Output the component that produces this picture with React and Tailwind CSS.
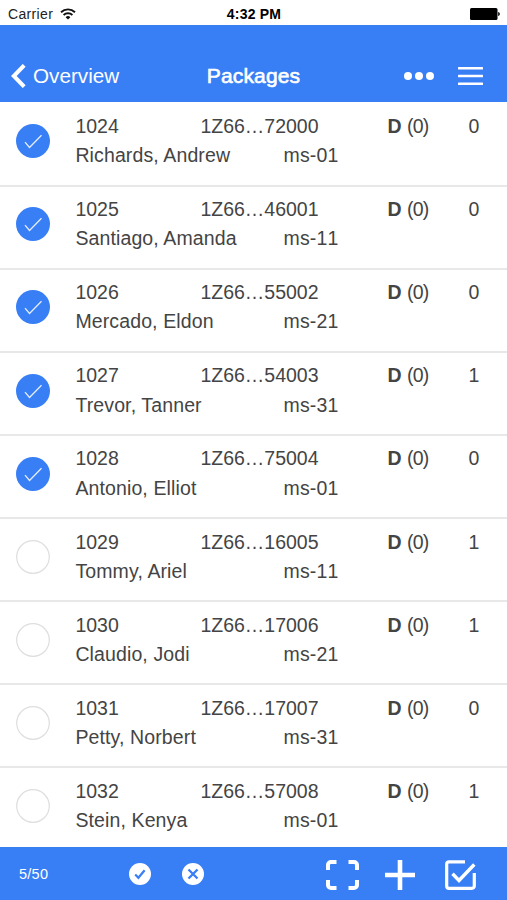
import React, { useState } from 'react';

const initialPackages = [
  { id: '1024', tracking: '1Z66…72000', name: 'Richards, Andrew', mailstop: 'ms-01', count: 0, selected: true },
  { id: '1025', tracking: '1Z66…46001', name: 'Santiago, Amanda', mailstop: 'ms-11', count: 0, selected: true },
  { id: '1026', tracking: '1Z66…55002', name: 'Mercado, Eldon', mailstop: 'ms-21', count: 0, selected: true },
  { id: '1027', tracking: '1Z66…54003', name: 'Trevor, Tanner', mailstop: 'ms-31', count: 1, selected: true },
  { id: '1028', tracking: '1Z66…75004', name: 'Antonio, Elliot', mailstop: 'ms-01', count: 0, selected: true },
  { id: '1029', tracking: '1Z66…16005', name: 'Tommy, Ariel', mailstop: 'ms-11', count: 1, selected: false },
  { id: '1030', tracking: '1Z66…17006', name: 'Claudio, Jodi', mailstop: 'ms-21', count: 1, selected: false },
  { id: '1031', tracking: '1Z66…17007', name: 'Petty, Norbert', mailstop: 'ms-31', count: 0, selected: false },
  { id: '1032', tracking: '1Z66…57008', name: 'Stein, Kenya', mailstop: 'ms-01', count: 1, selected: false },
];

const StatusBar = () => (
  <div className="h-[25px] shrink-0 grid grid-cols-3 items-center pl-2 pr-[7px] pt-[3px] text-[14px] leading-none text-black">
    <div className="flex items-center gap-[7px]">
      <span className="tracking-[0.35px] text-[#222]">Carrier</span>
      <svg width="16" height="12" viewBox="0 0 16 12" fill="none" stroke="#111" strokeWidth="1.9">
        <path d="M1 4.2a10.2 10.2 0 0 1 14 0" />
        <path d="M3.6 7a6.4 6.4 0 0 1 8.8 0" />
        <path d="M8 11.6 5.6 9.2a3.4 3.4 0 0 1 4.8 0Z" fill="#111" stroke="none" />
      </svg>
    </div>
    <span className="text-center font-bold text-[14px] tracking-[0.2px] whitespace-nowrap">4:32 PM</span>
    <svg className="justify-self-end" width="30" height="12" viewBox="0 0 30 12">
      <rect x="0" y="0" width="27.5" height="12" rx="1.5" fill="#000" />
      <path d="M28.2 4c1 .3 1.6 1 1.6 2s-.6 1.7-1.6 2Z" fill="#000" />
    </svg>
  </div>
);

const Header = () => (
  <header className="h-[77px] shrink-0 bg-[#387ef5] pt-6 text-white">
    <div className="grid grid-cols-[1fr_auto_1fr] items-center h-[53px] px-[11px]">
      <button className="flex items-center gap-[7px]">
        <svg width="15" height="24" viewBox="0 0 15 24" fill="none" stroke="#fff" strokeWidth="4">
          <path d="M13.2 1.3 2.8 12l10.4 10.7" />
        </svg>
        <span className="text-[20.7px] leading-6">Overview</span>
      </button>
      <h1 className="text-[21px] leading-6 tracking-[0.15px] [-webkit-text-stroke:0.6px_white]">Packages</h1>
      <div className="flex items-center justify-end gap-6 pr-[13px]">
        <svg width="30" height="8" viewBox="0 0 30 8" fill="#fff">
          <circle cx="4" cy="4" r="4" />
          <circle cx="15" cy="4" r="4" />
          <circle cx="26" cy="4" r="4" />
        </svg>
        <svg width="25" height="18" viewBox="0 0 25 18" fill="#fff">
          <rect y="0" width="25" height="2.6" rx="0.5" />
          <rect y="7.7" width="25" height="2.6" rx="0.5" />
          <rect y="15.4" width="25" height="2.6" rx="0.5" />
        </svg>
      </div>
    </div>
  </header>
);

const CheckCircle = ({ checked }) => (
  <svg width="34" height="34" viewBox="0 0 34 34" fill="none">
    {checked ? (
      <>
        <circle cx="17" cy="17" r="17" fill="#387ef5" />
        <path d="m9 18.2 4.5 5.3L25.5 11.3" stroke="#e4eefe" strokeWidth="1.3" />
      </>
    ) : (
      <circle cx="17" cy="17" r="16.3" stroke="#dedede" strokeWidth="1.2" />
    )}
  </svg>
);

const PackageRow = ({ item, onToggle }) => (
  <li className="h-[83.1px] shrink-0 flex border-b-2 border-[#e8e8e8] last:border-b-0">
    <button onClick={onToggle} className="w-[75.4px] shrink-0 pl-[15.7px] pt-[20.8px] flex items-start">
      <CheckCircle checked={item.selected} />
    </button>
    <div className="flex-1 pt-[8.6px] text-[19.5px] leading-[29.2px] text-[#444] whitespace-nowrap">
      <div className="grid grid-cols-[125px_187.2px_81px_1fr]">
        <span>{item.id}</span>
        <span>{item.tracking}</span>
        <span><b>D</b> <span className="tracking-[-0.8px]">(0)</span></span>
        <span>{item.count}</span>
      </div>
      <div className="grid grid-cols-[208.2px_1fr] tracking-[0.12px]">
        <span>{item.name}</span>
        <span className="[font-kerning:none]">{item.mailstop}</span>
      </div>
    </div>
  </li>
);

const Footer = ({ selected }) => (
  <footer className="h-[53px] shrink-0 bg-[#387ef5] flex items-center pl-[19px] pr-[31px] text-white">
    <span className="w-[109.5px] text-[14.5px] leading-5 tracking-[0.25px]">{selected}/50</span>
    <div className="flex items-center gap-[31px]">
      <svg width="22" height="22" viewBox="0 0 22 22" fill="none">
        <circle cx="11" cy="11" r="11" fill="#fff" />
        <path d="m6.2 11.4 3.2 3.4 6.2-7.6" stroke="#387ef5" strokeWidth="2.2" />
      </svg>
      <svg width="22" height="22" viewBox="0 0 22 22" fill="none">
        <circle cx="11" cy="11" r="11" fill="#fff" />
        <path d="m6.5 6.5 9 9m0-9-9 9" stroke="#387ef5" strokeWidth="2.3" />
      </svg>
    </div>
    <div className="ml-auto flex items-center pt-[3px]">
      <svg className="mr-[26px]" width="33" height="30" viewBox="0 0 33 30" fill="none" stroke="#fff" strokeWidth="4">
        <path d="M2 10V5a3 3 0 0 1 3-3h5.5M22.5 2H28a3 3 0 0 1 3 3v5M31 20v5a3 3 0 0 1-3 3h-5.5M10.5 28H5a3 3 0 0 1-3-3v-5" />
      </svg>
      <svg className="mr-[30.5px]" width="30" height="30" viewBox="0 0 30 30" stroke="#fff" strokeWidth="4.6">
        <path d="M15 0v30M0 15h30" />
      </svg>
      <svg width="31" height="30" viewBox="0 0 31 30" fill="none" stroke="#fff" strokeWidth="3.2">
        <path d="M20 1.8H4A2.3 2.3 0 0 0 1.700 4v22A2.300 2.300 0 0 0 4 28.300h23a2.300 2.300 0 0 0 2.300-2.300V13" />
        <path d="m7.500 13.800 6.500 6.700L29.300 4.500" strokeWidth="3.400" />
      </svg>
    </div>
  </footer>
);

const App = () => {
  const [packages, setPackages] = useState(initialPackages);

  const toggle = (id) =>
    setPackages(packages.map((p) => (p.id === id ? { ...p, selected: !p.selected } : p)));

  return (
    <div className="w-full h-screen flex flex-col overflow-hidden bg-white font-['Liberation_Sans',Arial,sans-serif]">
      <StatusBar />
      <Header />
      <ul className="flex-1 min-h-0 overflow-hidden flex flex-col pt-[1.5px]">
        {packages.map((p) => (
          <PackageRow key={p.id} item={p} onToggle={() => toggle(p.id)} />
        ))}
      </ul>
      <Footer selected={packages.filter((p) => p.selected).length} />
    </div>
  );
};

export default App;
